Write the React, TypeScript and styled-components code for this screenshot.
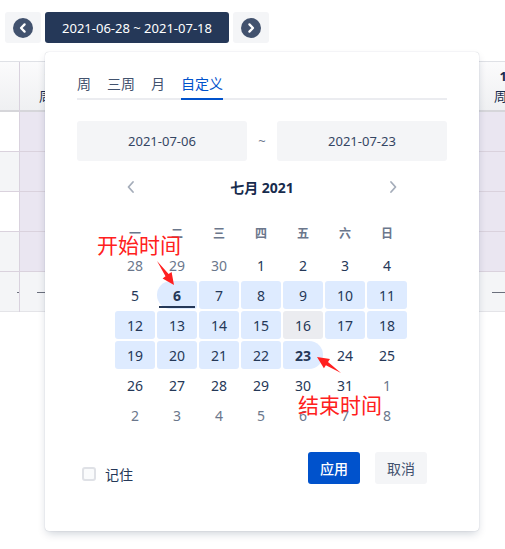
import styled, { createGlobalStyle, css } from 'styled-components';

const GlobalStyle = createGlobalStyle`
  html, body {
    margin: 0;
    padding: 0;
    background: #fff;
  }
  body {
    font-family: "Noto Sans", "Noto Sans CJK SC", sans-serif;
    color: #172b4d;
  }
  * {
    box-sizing: border-box;
  }
`;

const Page = styled.div`
  position: relative;
  width: 505px;
  height: 549px;
  overflow: hidden;
  background: #fff;
`;

/* top range switcher */
const Toolbar = styled.div`
  display: flex;
  gap: 4px;
  height: 43px;
  padding: 12px 5px 0;
`;

const NavButton = styled.button`
  width: 36px;
  height: 31px;
  padding: 0;
  border: 0;
  border-radius: 3px;
  background: #f4f5f7;
  display: flex;
  align-items: center;
  justify-content: center;
`;

const RangeButton = styled.button`
  width: 184px;
  height: 31px;
  padding: 0;
  border: 0;
  border-radius: 3px;
  background: #253858;
  color: #fff;
  font: 13px "Noto Sans", sans-serif;
`;

/* schedule table behind the popover */
const Table = styled.div`
  display: flex;
  margin-top: 18px;
  border-top: 1px solid #dfe1e6;
`;

const Column = styled.div<{ $w: number; $tone: 'plain' | 'lavender' }>`
  flex: none;
  width: ${p => p.$w}px;
  border-right: 1px solid #d9d2de;
  ${p =>
    p.$tone === 'lavender' &&
    css`
      & > div[data-body] {
        background: #eae6f1;
      }
    `}
`;

const HeadCell = styled.div`
  height: 50px;
  border-bottom: 2px solid #d6d6da;
  background: linear-gradient(#fbfbfc, #eff0f2);
  display: flex;
  flex-direction: column;
  align-items: center;
  justify-content: center;
  font-size: 13px;
  line-height: 20px;
  color: #172b4d;
  b {
    font-weight: 700;
  }
`;

const BodyCell = styled.div<{ $alt?: boolean }>`
  height: 40px;
  border-bottom: 1px solid #dad2dd;
  background: ${p => (p.$alt ? '#f4f5f7' : '#fff')};
  &:last-of-type {
    border-bottom: 2px solid #d3d3d6;
  }
`;

const SumCell = styled.div`
  height: 40px;
  background: #f4f5f7;
  border-bottom: 1px solid #e4e4e8;
  display: flex;
  align-items: center;
  padding-left: 17px;
`;

const Dash = styled.span`
  width: 18px;
  height: 1px;
  background: #6b6f7c;
  margin-top: 2px;
`;

/* popover */
const Popover = styled.div`
  position: absolute;
  left: 45px;
  top: 52px;
  width: 434px;
  height: 479px;
  background: #fff;
  border-radius: 4px;
  box-shadow: 0 4px 10px -2px rgba(9, 30, 66, 0.22), 0 0 1px rgba(9, 30, 66, 0.3);
  padding: 22px 32px 0;
  z-index: 2;
`;

const TabBar = styled.div`
  display: flex;
  gap: 16px;
  border-bottom: 2px solid #ebecf0;
`;

const Tab = styled.div<{ $active?: boolean }>`
  font-size: 14px;
  line-height: 20px;
  padding-bottom: 4px;
  margin-bottom: -2px;
  border-bottom: 2px solid ${p => (p.$active ? '#0052cc' : 'transparent')};
  color: ${p => (p.$active ? '#0052cc' : '#42526e')};
`;

const InputRow = styled.div`
  display: flex;
  align-items: center;
  margin-top: 21px;
`;

const DateInput = styled.div`
  width: 170px;
  height: 40px;
  border-radius: 3px;
  background: #f4f5f7;
  display: flex;
  align-items: center;
  justify-content: center;
  font-size: 13px;
  color: #344563;
`;

const Tilde = styled.div`
  flex: 1;
  text-align: center;
  font-size: 13px;
  color: #6b778c;
`;

const MonthHeader = styled.div`
  width: 294px;
  height: 24px;
  margin: 14px auto 0;
  padding: 0 10px;
  display: flex;
  align-items: center;
  justify-content: space-between;
`;

const MonthTitle = styled.div`
  font-size: 14px;
  font-weight: 700;
  color: #172b4d;
`;

const Calendar = styled.div`
  width: 294px;
  margin: 20px auto 0;
  display: grid;
  grid-template-columns: repeat(7, 40px);
  column-gap: 2px;
`;

const WeekDay = styled.div`
  height: 28px;
  margin-bottom: 4px;
  display: flex;
  align-items: center;
  justify-content: center;
  font-size: 12px;
  font-weight: 700;
  color: #6b778c;
`;

const Days = styled.div`
  grid-column: 1 / -1;
  display: grid;
  grid-template-columns: repeat(7, 40px);
  grid-auto-rows: 28px;
  gap: 2px;
`;

const Day = styled.div<{ $muted?: boolean; $range?: boolean; $today?: boolean; $edge?: 'start' | 'end' }>`
  position: relative;
  display: flex;
  align-items: center;
  justify-content: center;
  font-size: 14px;
  border-radius: 3px;
  color: ${p => (p.$muted ? '#6b778c' : '#253858')};
  background: ${p => (p.$today ? '#ebecf0' : p.$range ? '#deebff' : 'transparent')};
  ${p =>
    p.$edge &&
    css`
      font-weight: 700;
      color: #253858;
    `}
  ${p =>
    p.$edge === 'start' &&
    css`
      border-radius: 14px 3px 3px 14px;
      &::after {
        content: '';
        position: absolute;
        left: 2px;
        right: 2px;
        bottom: 1px;
        height: 2px;
        background: #253858;
      }
    `}
  ${p =>
    p.$edge === 'end' &&
    css`
      border-radius: 3px 14px 14px 3px;
    `}
`;

const Footer = styled.div`
  display: flex;
  align-items: flex-end;
  margin-top: 23px;
  padding: 0 20px 0 5px;
`;

const Remember = styled.label`
  display: flex;
  align-items: center;
  gap: 9px;
  height: 20px;
  font-size: 14px;
  color: #253858;
`;

const Check = styled.span`
  width: 14px;
  height: 14px;
  border: 2px solid #dfe1e6;
  border-radius: 3px;
  background: #fafbfc;
`;

const Spacer = styled.div`
  flex: 1;
`;

const Button = styled.button<{ $primary?: boolean }>`
  width: 52px;
  height: 32px;
  border: 0;
  border-radius: 3px;
  padding: 0;
  font-family: "Noto Sans CJK SC", sans-serif;
  font-size: 14px;
  font-weight: ${p => (p.$primary ? 500 : 400)};
  background: ${p => (p.$primary ? '#0052cc' : '#f4f5f7')};
  color: ${p => (p.$primary ? '#fff' : '#42526e')};
  & + & {
    margin-left: 15px;
  }
`;

/* red annotations drawn over the screenshot */
const Note = styled.div<{ $x: number; $y: number }>`
  position: absolute;
  left: ${p => p.$x}px;
  top: ${p => p.$y}px;
  font-family: "Noto Sans CJK SC", sans-serif;
  font-size: 21px;
  line-height: 24px;
  color: #ff2020;
  z-index: 3;
`;

const Overlay = styled.svg`
  position: absolute;
  left: 0;
  top: 0;
  pointer-events: none;
  z-index: 3;
`;

const NavIcon = ({ dir }: { dir: 'left' | 'right' }) => (
  <svg width="20" height="20" viewBox="0 0 20 20">
    <circle cx="10" cy="10" r="10" fill="#42526e" />
    <path
      d={dir === 'left' ? 'M11.6 6.4 L8 10 L11.6 13.6' : 'M8.4 6.4 L12 10 L8.4 13.6'}
      fill="none"
      stroke="#fff"
      strokeWidth="2.3"
      strokeLinecap="round"
      strokeLinejoin="round"
    />
  </svg>
);

const Chevron = ({ dir }: { dir: 'left' | 'right' }) => (
  <svg width="12" height="14" viewBox="0 0 12 14">
    <path
      d={dir === 'left' ? 'M8 2 L3.5 7 L8 12' : 'M4 2 L8.5 7 L4 12'}
      fill="none"
      stroke="#a5adba"
      strokeWidth="1.8"
      strokeLinecap="round"
      strokeLinejoin="round"
    />
  </svg>
);

function arrow(x1: number, y1: number, x2: number, y2: number) {
  const dx = x2 - x1;
  const dy = y2 - y1;
  const len = Math.hypot(dx, dy);
  const ux = dx / len;
  const uy = dy / len;
  const nx = -uy;
  const ny = ux;
  const head = 12;
  const wing = 5.5;
  const shaft = 1.9;
  const bx = x2 - ux * head;
  const by = y2 - uy * head;
  return [
    [x1, y1],
    [bx + nx * shaft, by + ny * shaft],
    [bx + nx * wing, by + ny * wing],
    [x2, y2],
    [bx - nx * wing, by - ny * wing],
    [bx - nx * shaft, by - ny * shaft],
  ]
    .map(p => p.map(v => v.toFixed(1)).join(','))
    .join(' ');
}

type Cell = { d: number; muted?: boolean };

const weeks: Cell[][] = [
  [{ d: 28, muted: true }, { d: 29, muted: true }, { d: 30, muted: true }, { d: 1 }, { d: 2 }, { d: 3 }, { d: 4 }],
  [5, 6, 7, 8, 9, 10, 11].map(d => ({ d })),
  [12, 13, 14, 15, 16, 17, 18].map(d => ({ d })),
  [19, 20, 21, 22, 23, 24, 25].map(d => ({ d })),
  [{ d: 26 }, { d: 27 }, { d: 28 }, { d: 29 }, { d: 30 }, { d: 31 }, { d: 1, muted: true }],
  [2, 3, 4, 5, 6, 7, 8].map(d => ({ d, muted: true })),
];

const weekDays = ['一', '二', '三', '四', '五', '六', '日'];

const columns = [
  { w: 20, tone: 'plain' as const, head: null },
  { w: 65, tone: 'lavender' as const, head: ['12', '周一'] },
  { w: 65, tone: 'lavender' as const, head: ['13', '周二'] },
  { w: 65, tone: 'lavender' as const, head: ['14', '周三'] },
  { w: 65, tone: 'lavender' as const, head: ['15', '周四'] },
  { w: 65, tone: 'lavender' as const, head: ['16', '周五'] },
  { w: 65, tone: 'lavender' as const, head: ['17', '周六'] },
  { w: 65, tone: 'lavender' as const, head: ['18', '周日'] },
  { w: 65, tone: 'lavender' as const, head: ['19', '周一'] },
];

export default function App() {
  return (
    <Page>
      <GlobalStyle />
      <Toolbar>
        <NavButton>
          <NavIcon dir="left" />
        </NavButton>
        <RangeButton>2021-06-28 ~ 2021-07-18</RangeButton>
        <NavButton>
          <NavIcon dir="right" />
        </NavButton>
      </Toolbar>

      <Table>
        {columns.map((c, i) => (
          <Column key={i} $w={c.w} $tone={c.tone}>
            <HeadCell>
              {c.head && (
                <>
                  <b>{c.head[0]}</b>
                  <span>{c.head[1]}</span>
                </>
              )}
            </HeadCell>
            {[0, 1, 2, 3].map(r => (
              <BodyCell key={r} data-body $alt={r % 2 === 1} />
            ))}
            <SumCell>
              <Dash />
            </SumCell>
          </Column>
        ))}
      </Table>

      <Popover>
        <TabBar>
          <Tab>周</Tab>
          <Tab>三周</Tab>
          <Tab>月</Tab>
          <Tab $active>自定义</Tab>
        </TabBar>

        <InputRow>
          <DateInput>2021-07-06</DateInput>
          <Tilde>~</Tilde>
          <DateInput>2021-07-23</DateInput>
        </InputRow>

        <MonthHeader>
          <Chevron dir="left" />
          <MonthTitle>七月 2021</MonthTitle>
          <Chevron dir="right" />
        </MonthHeader>

        <Calendar>
          {weekDays.map(w => (
            <WeekDay key={w}>{w}</WeekDay>
          ))}
          <Days>
            {weeks.flatMap((week, wi) =>
              week.map((c, di) => {
                const inMonth = !c.muted;
                const range = inMonth && c.d >= 6 && c.d <= 23;
                const edge = inMonth && c.d === 6 ? 'start' : inMonth && c.d === 23 ? 'end' : undefined;
                return (
                  <Day
                    key={`${wi}-${di}`}
                    $muted={c.muted}
                    $range={range}
                    $today={inMonth && c.d === 16}
                    $edge={edge}
                  >
                    {c.d}
                  </Day>
                );
              })
            )}
          </Days>
        </Calendar>

        <Footer>
          <Remember>
            <Check />
            记住
          </Remember>
          <Spacer />
          <Button $primary>应用</Button>
          <Button>取消</Button>
        </Footer>
      </Popover>

      <Note $x={97} $y={232}>开始时间</Note>
      <Note $x={298} $y={392}>结束时间</Note>
      <Overlay width="505" height="549" viewBox="0 0 505 549">
        <polygon points={arrow(157, 261, 174, 285)} fill="#ff2020" />
        <polygon points={arrow(341, 373, 317, 357)} fill="#ff2020" />
      </Overlay>
    </Page>
  );
}
